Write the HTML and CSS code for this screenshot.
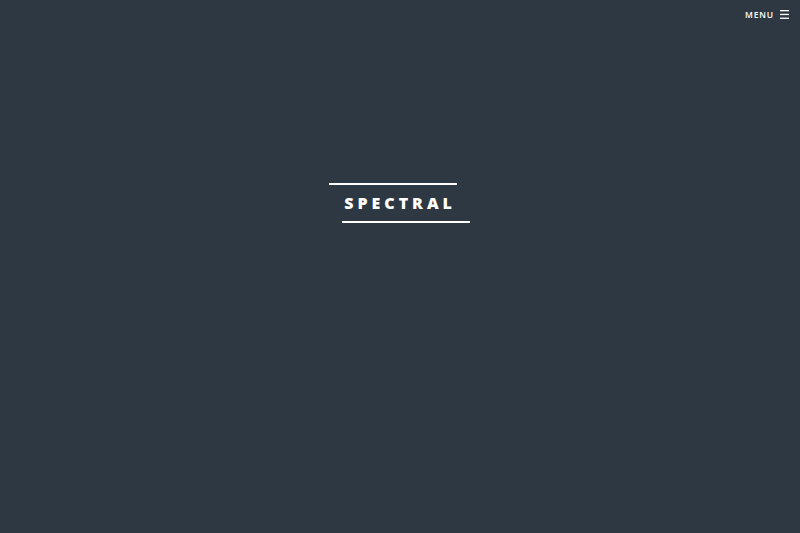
FILE: index.html
```html
<!DOCTYPE html>
<html>
<head>
<meta charset="utf-8">
<link rel="stylesheet" href="styles.css">
</head>
<body>
<header class="topbar">
  <a class="menu">MENU
    <svg class="burger" width="9" height="9" viewBox="0 0 9 9"><rect x="0" y="0" width="9" height="1.3" fill="#fff"/><rect x="0" y="3.8" width="9" height="1.3" fill="#fff"/><rect x="0" y="7.6" width="9" height="1.3" fill="#fff"/></svg>
  </a>
</header>
<main class="banner">
  <h2 class="title">SPECTRAL</h2>
</main>
</body>
</html>
```
FILE: styles.css
```css
html, body { margin: 0; padding: 0; }
body {
  width: 800px; height: 533px; overflow: hidden;
  background: #2e3842;
  font-family: "Open Sans", sans-serif;
  color: #fff;
}
.topbar {
  display: flex; justify-content: flex-end;
  height: 28px; align-items: center;
  padding-right: 11px;
}
.menu {
  display: flex; align-items: center; gap: 6px;
  font-size: 8.5px; font-weight: 600; letter-spacing: 0.1em;
  color: #fff; text-decoration: none;
}
.burger { display: block; }
.banner {
  display: flex; justify-content: center;
  padding-top: 155px;
}
.title {
  position: relative;
  margin: 0;
  width: 128px; height: 40px;
  display: flex; align-items: center; justify-content: center;
  font-size: 16px; font-weight: 800; letter-spacing: 0.25em;
  text-indent: 0;
  line-height: 1;
}
.title::before, .title::after {
  content: ""; position: absolute; left: 0; width: 128px; height: 2px; background: #fff;
}
.title::before { top: 0; transform: translateX(-7px); }
.title::after { bottom: 0; transform: translateX(6px); }
```
